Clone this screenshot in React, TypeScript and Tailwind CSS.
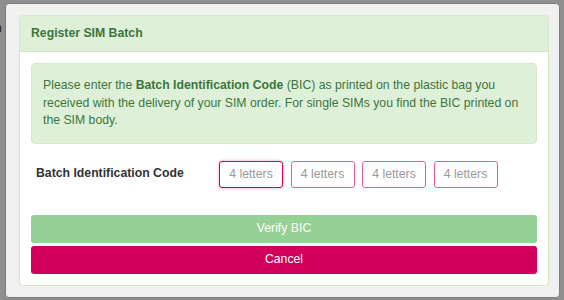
import React from 'react';

const sans = { fontFamily: '"Liberation Sans", Arial, sans-serif' };

export default function App() {
  return (
    <div className="relative w-[564px] h-[300px] overflow-hidden bg-[#8f8f8f] text-[12.25px] leading-[17.5px]" style={sans}>
      {/* table header peeking out behind the modal */}
      <div className="absolute -top-[12px] left-0 w-full font-bold text-[#222]">
        <span className="absolute left-[62px]">Account ID</span>
        <span className="absolute left-[197px]">FF</span>
        <span className="absolute left-[280px]">last</span>
        <span className="absolute left-[432px]">last SMS</span>
      </div>
      <span className="absolute left-[-5px] top-[20px] text-[#222]">n</span>

      {/* modal */}
      <div className="absolute left-[5px] top-[3px] w-[555px] h-[295px] rounded-[4px] bg-[#f0f0f0] border border-[#7d7d7d] pl-[13px] pr-[10px] pt-[11px]">
        <div className="rounded-[4px] border border-[#d6e9c6] bg-white">
          <div className="bg-[#dff0d8] border-b border-[#d6e9c6] rounded-t-[3px] h-[36px] px-[11px] flex items-center">
            <h3 className="font-bold text-[#3c763d] text-[12.25px]">Register SIM Batch</h3>
          </div>

          <div className="p-[11px]">
            <div className="bg-[#dff0d8] border border-[#d6e9c6] rounded-[4px] text-[#3c763d] px-[11px] py-[13px]">
              Please enter the <strong>Batch Identification Code</strong> (BIC) as printed on the plastic bag you received
              with the delivery of your SIM order. For single SIMs you find the BIC printed on the SIM body.
            </div>

            <div className="flex items-center mt-[17px]">
              <label className="w-[188px] pl-[5px] font-bold text-[#333]">Batch Identification Code</label>
              <div className="flex gap-[7.5px]">
                {[0, 1, 2, 3].map((i) => (
                  <input
                    key={i}
                    autoFocus={i === 0}
                    placeholder="4 letters"
                    className={`w-[64px] h-[27px] rounded-[3px] bg-white text-center text-[12.25px] text-[#555] placeholder:text-[#999] outline-none border ${
                      i === 0
                        ? 'border-[#d5005e] shadow-[0_0_3px_rgba(213,0,94,0.45)]'
                        : 'border-[#e2619d]'
                    }`}
                    style={sans}
                  />
                ))}
              </div>
            </div>

            <div className="mt-[27px] flex flex-col gap-[3px]">
              <button className="h-[28px] w-full rounded-[3px] bg-[#95d195] text-white" style={sans}>
                Verify BIC
              </button>
              <button className="h-[28px] w-full rounded-[3px] bg-[#d3005b] text-white" style={sans}>
                Cancel
              </button>
            </div>
          </div>
        </div>
      </div>
    </div>
  );
}
